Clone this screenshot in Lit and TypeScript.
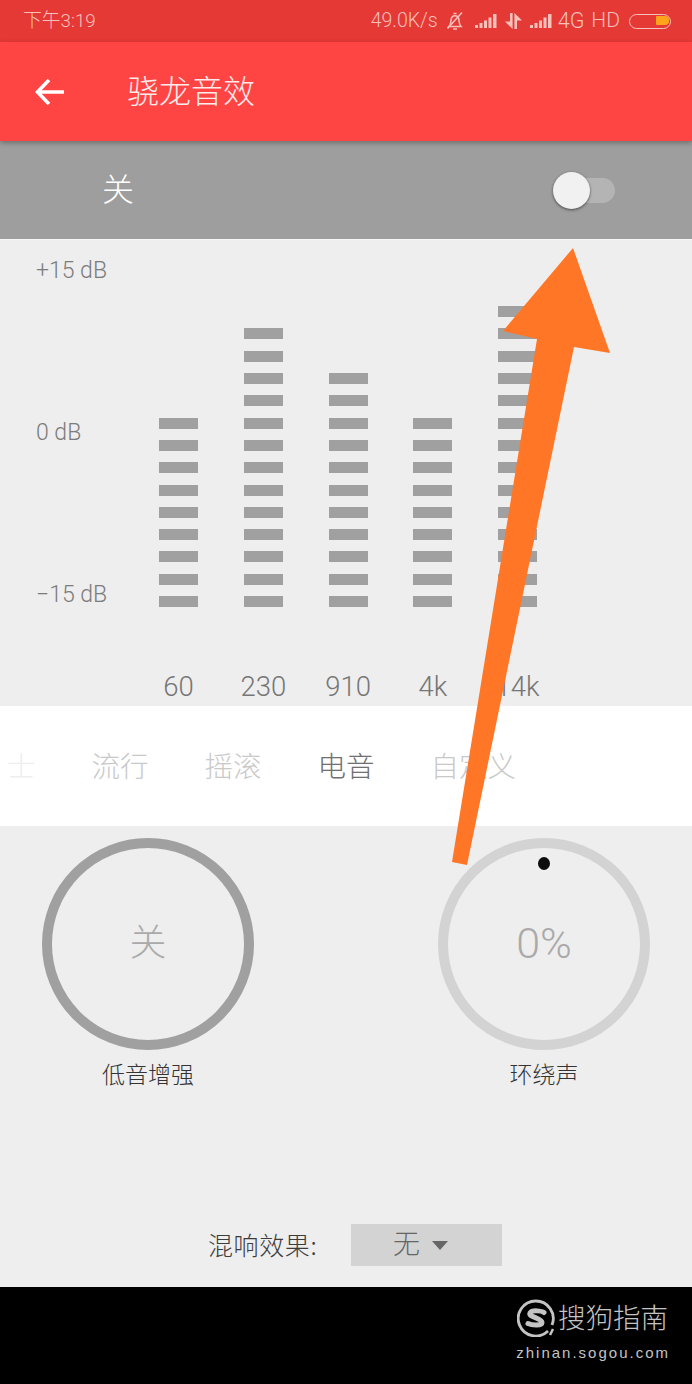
import { LitElement, html, css, svg } from "lit";
import { customElement } from "lit/decorators.js";

const bands = [
	{ label: "60", count: 9 },
	{ label: "230", count: 13 },
	{ label: "910", count: 11 },
	{ label: "4k", count: 9 },
	{ label: "14k", count: 14 },
];

const signal = svg`
	<rect x="0" y="11" width="3" height="3" />
	<rect x="4.500" y="9" width="3" height="5" />
	<rect x="9" y="6.500" width="3" height="7.500" />
	<rect x="13.500" y="3.500" width="3" height="10.500" />
	<rect x="18" y="0" width="3.500" height="14" />
`;

@customElement("app-root")
export class AppRoot extends LitElement
{
	static styles = css`
		:host {
			display: block;
			position: relative;
			width: 692px;
			height: 1384px;
			overflow: hidden;
			font-family: "Noto Sans CJK SC", Roboto, sans-serif;
			background: #eeeeee;
		}

		.page {
			display: flex;
			flex-direction: column;
			height: 100%;
		}

		.status {
			flex: none;
			height: 42px;
			display: flex;
			align-items: center;
			padding: 0 21px 0 23px;
			background: #e53935;
			color: #f8c0bb;
			font-family: Roboto, sans-serif;
			font-weight: 300;
			font-size: 19px;
		}

		.time {
			flex: 1;
			margin-bottom: 5px;
			font-family: Roboto, "Noto Sans CJK SC", sans-serif;
			font-size: 18.8px;
		}

		.status-right {
			display: flex;
			align-items: center;
		}

		.status svg {
			display: block;
			fill: #f8c0bb;
		}

		.speed { margin-right: 8px; margin-bottom: 2px; font-size: 19.5px; }
		.bell { margin-right: 11px; fill: none !important; stroke: #f8c0bb; stroke-width: 1.6; }
		.sig-a { margin-right: 8px; }
		.updown { margin-right: 8px; }
		.sig-b { margin-right: 6px; }
		.net { margin-right: 7px; margin-bottom: 2px; font-size: 21.5px; }
		.hd { margin-right: 9px; margin-bottom: 2px; font-size: 21px; }

		.battery {
			position: relative;
			width: 42px;
			height: 15px;
			box-sizing: border-box;
			border: 1.5px solid #f8c0bb;
			border-radius: 8px;
		}

		.battery i {
			position: absolute;
			top: 1.5px;
			right: 1.5px;
			width: 13px;
			height: 9px;
			background: #ffa31a;
			border-radius: 1px 4px 4px 1px;
		}

		.header {
			flex: none;
			height: 99px;
			display: flex;
			align-items: center;
			padding-left: 35px;
			background: #ff4444;
			color: #ffffff;
			position: relative;
			z-index: 2;
			box-shadow: 0 2px 5px rgba(0, 0, 0, 0.3);
		}

		.back {
			display: block;
			margin-right: 62px;
			fill: none;
			stroke: #ffffff;
			stroke-width: 3.6;
		}

		.title {
			font-size: 32px;
			font-weight: 300;
			color: #ffe9e9;
			line-height: 40px;
			margin-bottom: 6px;
		}

		.power {
			flex: none;
			height: 98px;
			display: flex;
			align-items: center;
			justify-content: space-between;
			padding: 0 77px 0 102px;
			background: #9e9e9e;
			color: #ffffff;
			font-size: 32px;
			font-weight: 300;
		}

		.power-label { margin-bottom: 6px; }

		.switch {
			position: relative;
			width: 60px;
			height: 25px;
			border-radius: 13px;
			background: #b4b4b4;
		}

		.switch i {
			position: absolute;
			left: -2px;
			top: -6px;
			width: 37px;
			height: 37px;
			border-radius: 50%;
			background: #f1f1f1;
			box-shadow: 0 1px 3px rgba(0, 0, 0, 0.55);
		}

		.eq {
			flex: none;
			height: 467px;
			box-sizing: border-box;
			display: flex;
			padding-top: 18px;
			border-top: 1px solid #f6f6f6;
		}

		.scale {
			box-sizing: border-box;
			width: 159px;
			height: 349px;
			padding: 1px 0 0 36px;
			display: flex;
			flex-direction: column;
			justify-content: space-between;
			font-family: Roboto, sans-serif;
			font-weight: 300;
			font-size: 23px;
			line-height: 24px;
			white-space: nowrap;
			color: #7c7c7c;
		}

		.bands {
			display: flex;
			gap: 45.75px;
		}

		.band {
			width: 39px;
			display: flex;
			flex-direction: column;
			align-items: center;
		}

		.stack {
			height: 349px;
			display: flex;
			flex-direction: column;
			justify-content: flex-end;
			gap: 11.3px;
		}

		.stack i {
			display: block;
			width: 39px;
			height: 11px;
			background: #a0a0a0;
		}

		.freq {
			margin-top: 64px;
			font-family: Roboto, sans-serif;
			font-weight: 300;
			font-size: 27.5px;
			line-height: 32px;
			white-space: nowrap;
			color: #767676;
		}

		.presets {
			flex: none;
			height: 120px;
			box-sizing: border-box;
			padding: 0 0 4px 7px;
			display: flex;
			align-items: center;
			gap: 56px;
			background: #ffffff;
			overflow: hidden;
			font-size: 28.5px;
			font-weight: 300;
			color: #c9c9c9;
		}

		.presets span { white-space: nowrap; }
		.presets .first { color: #efefef; }
		.presets .active { color: #707070; }

		.lower {
			flex: 1;
			display: flex;
			flex-direction: column;
			padding: 12px 0 21px;
			box-sizing: border-box;
		}

		.knobs {
			display: flex;
			gap: 184px;
			padding-left: 42px;
		}

		.knob {
			display: flex;
			flex-direction: column;
			align-items: center;
			gap: 8px;
			width: 212px;
		}

		.ring {
			position: relative;
			box-sizing: border-box;
			width: 212px;
			height: 212px;
			border-radius: 50%;
			border: 10px solid #a0a0a0;
			display: flex;
			align-items: center;
			justify-content: center;
			font-size: 37px;
			font-weight: 300;
			color: #aaaaaa;
		}

		.ring.off { border-color: #d3d3d3; }
		.glyph { margin-bottom: 8px; }
		.ring .pct { font-family: Roboto, sans-serif; font-size: 43px; font-weight: 300; margin-bottom: 2px; }

		.dot {
			position: absolute;
			top: 9px;
			left: 50%;
			width: 12px;
			height: 13px;
			border-radius: 50%;
			background: #0c0c0c;
			transform: translateX(-50%);
		}

		.knob-label {
			font-size: 23px;
			line-height: 30px;
			font-weight: 300;
			color: #333333;
		}

		.reverb {
			margin-top: auto;
			display: flex;
			align-items: center;
			gap: 33px;
			padding-left: 208px;
		}

		.reverb-label {
			font-size: 25px;
			font-weight: 300;
			letter-spacing: 0.6px;
			color: #3c3c3c;
			white-space: nowrap;
			width: 110px;
			margin-bottom: 2px;
		}

		.select {
			width: 151px;
			height: 42px;
			box-sizing: border-box;
			padding-right: 12px;
			display: flex;
			align-items: center;
			justify-content: center;
			gap: 12px;
			background: #d3d3d3;
			font-size: 27px;
			font-weight: 300;
			color: #666666;
		}

		.select span { margin-bottom: 6px; }

		.select i {
			width: 0;
			height: 0;
			border-left: 8px solid transparent;
			border-right: 8px solid transparent;
			border-top: 9px solid #666666;
		}

		.footer {
			flex: none;
			height: 97px;
			box-sizing: border-box;
			background: #000000;
			display: flex;
			flex-direction: column;
			align-items: flex-end;
			padding: 9px 24px 0 0;
			color: #c4c4c4;
		}

		.brand {
			display: flex;
			align-items: center;
			gap: 3px;
			font-size: 27.5px;
			font-weight: 300;
			line-height: 40px;
		}

		.brand span { margin-bottom: 3px; }
		.brand svg { display: block; fill: none; stroke: #c4c4c4; }

		.site {
			margin-top: 5px;
			font-family: "Liberation Sans", sans-serif;
			font-size: 15px;
			line-height: 18px;
			letter-spacing: 2px;
			margin-right: -2px;
		}

		.arrow {
			position: absolute;
			left: 0;
			top: 0;
			width: 692px;
			height: 1384px;
			z-index: 5;
			pointer-events: none;
		}
	`;

	render()
	{
		return html`
			<div class="page">
				<div class="status">
					<span class="time">下午3:19</span>
					<div class="status-right">
						<span class="speed">49.0K/s</span>
						<svg class="bell" width="18" height="20" viewBox="0 0 18 20">
							<path d="M3 15.500c1.500-1.500 1.800-3 2-6 .2-3 2-4.800 4-4.800s3.800 1.800 4 4.800c.2 3 .6 4.500 2 6z" />
							<path d="M7 18h4M1.500 17.500 16 1.500M7.500 2.500h3" />
						</svg>
						<svg class="sig-a" width="22" height="14" viewBox="0 0 22 14">${signal}</svg>
						<svg class="updown" width="17" height="16" viewBox="0 0 17 16">
							<path d="M5 0h2.600v16L0 8.500h5zM9.400 0 17 7.500h-5V16H9.400z" />
						</svg>
						<svg class="sig-b" width="22" height="14" viewBox="0 0 22 14">${signal}</svg>
						<span class="net">4G</span>
						<span class="hd">HD</span>
						<div class="battery"><i></i></div>
					</div>
				</div>

				<div class="header">
					<svg class="back" width="30" height="28" viewBox="0 0 30 28">
						<path d="M29 14H3M14 2 2.500 14 14 26" />
					</svg>
					<span class="title">骁龙音效</span>
				</div>

				<div class="power">
					<span class="power-label">关</span>
					<div class="switch"><i></i></div>
				</div>

				<div class="eq">
					<div class="scale">
						<span>+15 dB</span>
						<span>0 dB</span>
						<span>−15 dB</span>
					</div>
					<div class="bands">
						${bands.map(b => html`
							<div class="band">
								<div class="stack">
									${Array.from({ length: b.count }, () => html`<i></i>`)}
								</div>
								<span class="freq">${b.label}</span>
							</div>
						`)}
					</div>
				</div>

				<div class="presets">
					<span class="first">士</span>
					<span>流行</span>
					<span>摇滚</span>
					<span class="active">电音</span>
					<span>自定义</span>
				</div>

				<div class="lower">
					<div class="knobs">
						<div class="knob">
							<div class="ring"><span class="glyph">关</span></div>
							<span class="knob-label">低音增强</span>
						</div>
						<div class="knob">
							<div class="ring off">
								<i class="dot"></i>
								<span class="pct">0%</span>
							</div>
							<span class="knob-label">环绕声</span>
						</div>
					</div>
					<div class="reverb">
						<span class="reverb-label">混响效果:</span>
						<div class="select"><span>无</span><i></i></div>
					</div>
				</div>

				<div class="footer">
					<div class="brand">
						<svg width="38" height="38" viewBox="0 0 38 38">
							<path stroke-width="2.800" d="M31 32A17.500 17.500 0 1 1 35 26" />
							<path stroke-width="5" stroke-linecap="round" d="M27 13.500c-2-1.500-12-3-14 .5-2 4 12 5 12 9.500 0 3.500-10 3-14 1" />
							<path stroke-width="2.500" d="M36 30l-3 6" />
						</svg>
						<span>搜狗指南</span>
					</div>
					<span class="site">zhinan.sogou.com</span>
				</div>
			</div>

			<svg class="arrow" viewBox="0 0 692 1384">
				<polygon fill="#ff7626" points="573,248 610,353 574,347 467,865 452,862 537,339 503,331" />
			</svg>
		`;
	}
}
